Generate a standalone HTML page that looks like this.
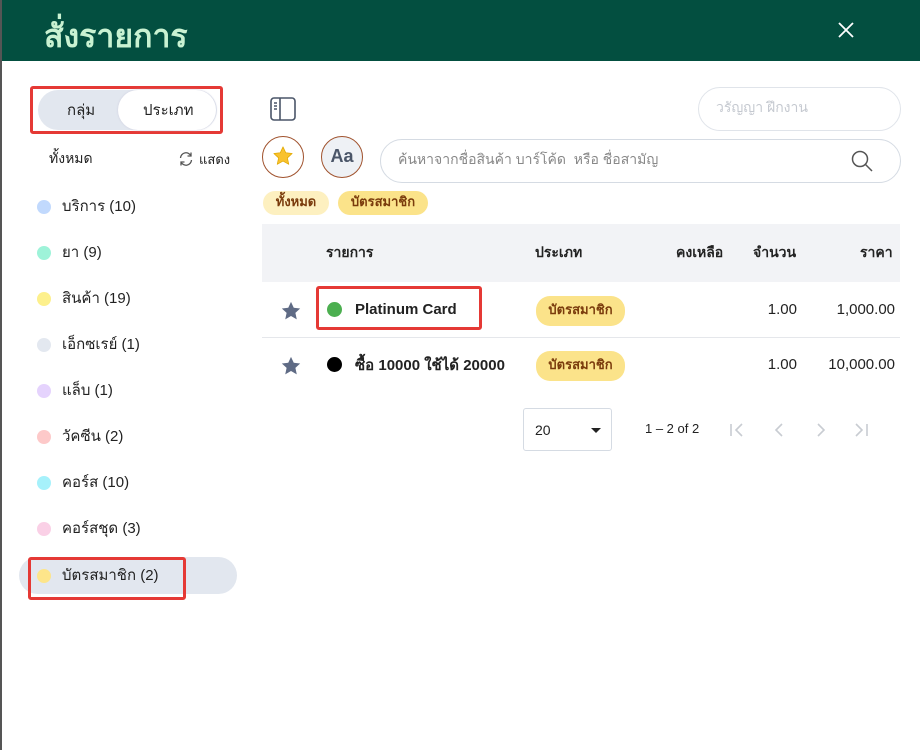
<!DOCTYPE html>
<html><head><meta charset="utf-8"><style>
*{box-sizing:border-box;margin:0;padding:0}
body{width:920px;height:750px;background:#fff;font-family:"Liberation Sans","Noto Sans CJK SC",sans-serif;position:relative;overflow:hidden;color:#222}
.abs{position:absolute}
.hdr{left:0;top:0;width:920px;height:61px;background:#034f40;border-left:2px solid #555}
.title{left:44px;top:11px;font-size:32px;color:#c9f2d2;font-weight:bold}
.lb{left:0;top:61px;width:2px;height:689px;background:#555}
.red{border:3px solid #e53935;border-radius:3px}
.dot{width:14px;height:14px;border-radius:50%}
.cat{left:37px;font-size:15px;color:#222}
.cat .dot{position:absolute;left:0;top:6px}
.cat span{position:absolute;left:25px;top:0;white-space:nowrap}
.pill{background:#fbe38a;color:#7a3b0c;border-radius:14px;font-size:13px;font-weight:bold;text-align:center}
.th{top:243px;font-size:14px;font-weight:bold;color:#222}
.num{font-size:15px;color:#222;text-align:right}
</style></head><body>
<div class="abs hdr"></div>
<div class="abs lb"></div>
<div class="abs title">สั่งรายการ</div>
<svg class="abs" style="left:836px;top:20px" width="20" height="20" viewBox="0 0 20 20"><path d="M3 3L17 17M17 3L3 17" stroke="#fff" stroke-width="1.8"/></svg>

<div class="abs red" style="left:30px;top:86px;width:193px;height:48px"></div>
<div class="abs" style="left:38px;top:90px;width:179px;height:40px;background:#e2e7ef;border-radius:20px"></div>
<div class="abs" style="left:118px;top:90px;width:98px;height:40px;background:#fff;border-radius:20px;box-shadow:0 0 2px #ccd"></div>
<div class="abs" style="left:67px;top:98px;font-size:15px">กลุ่ม</div>
<div class="abs" style="left:143px;top:98px;font-size:15px">ประเภท</div>

<div class="abs" style="left:49px;top:148px;font-size:14px">ทั้งหมด</div>
<svg class="abs" style="left:178px;top:151px" width="16" height="16" viewBox="0 0 16 16" fill="none" stroke="#555" stroke-width="1.3"><path d="M2.5 7A5.5 5.5 0 0 1 13 5M13.5 9A5.5 5.5 0 0 1 3 11"/><path d="M13 1.5V5H9.5M3 14.5V11H6.5"/></svg>
<div class="abs" style="left:199px;top:149px;font-size:13px">แสดง</div>

<div class="abs" style="left:19px;top:557px;width:218px;height:37px;background:#e2e7ef;border-radius:19px"></div>
<div class="abs red" style="left:28px;top:557px;width:158px;height:43px"></div>

<div class="abs cat" style="top:194px"><div class="dot" style="background:#c1d9fd"></div><span>บริการ (10)</span></div>
<div class="abs cat" style="top:240px"><div class="dot" style="background:#9ef3d9"></div><span>ยา (9)</span></div>
<div class="abs cat" style="top:286px"><div class="dot" style="background:#fdf08c"></div><span>สินค้า (19)</span></div>
<div class="abs cat" style="top:332px"><div class="dot" style="background:#e3e8f0"></div><span>เอ็กซเรย์ (1)</span></div>
<div class="abs cat" style="top:378px"><div class="dot" style="background:#e5d3fd"></div><span>แล็บ (1)</span></div>
<div class="abs cat" style="top:424px"><div class="dot" style="background:#fdc9c9"></div><span>วัคซีน (2)</span></div>
<div class="abs cat" style="top:470px"><div class="dot" style="background:#a6f1fb"></div><span>คอร์ส (10)</span></div>
<div class="abs cat" style="top:516px"><div class="dot" style="background:#fad0e6"></div><span>คอร์สชุด (3)</span></div>
<div class="abs cat" style="top:563px"><div class="dot" style="background:#fde58a"></div><span>บัตรสมาชิก (2)</span></div>

<svg class="abs" style="left:270px;top:97px" width="26" height="24" viewBox="0 0 26 24" fill="none" stroke="#4a5568" stroke-width="1.6"><rect x="1" y="1" width="24" height="22" rx="3"/><path d="M10 1V23M4 6H7M4 9H7M4 12H7"/></svg>
<div class="abs" style="left:698px;top:87px;width:203px;height:44px;border:1px solid #e0e4ea;border-radius:22px"></div>
<div class="abs" style="left:716px;top:97px;font-size:14px;color:#c5c9d0">วรัญญา ฝึกงาน</div>

<div class="abs" style="left:262px;top:136px;width:42px;height:42px;border:1.5px solid #a0522d;border-radius:50%"></div>
<svg class="abs" style="left:272px;top:145px" width="22" height="22" viewBox="0 0 24 24"><path d="M12 2l3 6.5 7 .8-5.2 4.8 1.5 7L12 17.5 5.7 21.1l1.5-7L2 9.3l7-.8z" fill="#f9c22e" stroke="#e0a800" stroke-width=".8" stroke-linejoin="round"/></svg>
<div class="abs" style="left:321px;top:136px;width:42px;height:42px;border:1.5px solid #a0522d;border-radius:50%;background:#eef1f5;text-align:center;line-height:39px;font-size:18px;color:#4a5568;font-weight:bold">Aa</div>
<div class="abs" style="left:380px;top:139px;width:521px;height:44px;border:1px solid #d5dbe3;border-radius:22px"></div>
<div class="abs" style="left:398px;top:149px;font-size:14px;color:#888">ค้นหาจากชื่อสินค้า บาร์โค้ด&nbsp; หรือ ชื่อสามัญ</div>
<svg class="abs" style="left:850px;top:149px" width="24" height="24" viewBox="0 0 24 24" fill="none" stroke="#555" stroke-width="1.5"><circle cx="10" cy="10" r="7.5"/><path d="M15.5 15.5L22 22"/></svg>

<div class="abs pill" style="left:263px;top:191px;width:66px;height:24px;line-height:22px;background:#fdf0c0">ทั้งหมด</div>
<div class="abs pill" style="left:338px;top:191px;width:90px;height:24px;line-height:22px">บัตรสมาชิก</div>

<div class="abs" style="left:262px;top:224px;width:638px;height:58px;background:#f2f3f6"></div>
<div class="abs th" style="left:326px;top:242px">รายการ</div>
<div class="abs th" style="left:535px;top:242px">ประเภท</div>
<div class="abs th" style="left:676px;top:242px">คงเหลือ</div>
<div class="abs th" style="left:753px;top:242px">จำนวน</div>
<div class="abs th" style="left:860px;top:242px">ราคา</div>
<div class="abs" style="left:262px;top:337px;width:638px;height:1px;background:#e5e7eb"></div>

<svg class="abs" style="left:280px;top:300px" width="22" height="22" viewBox="0 0 24 24"><path d="M12 2l3 6.5 7 .8-5.2 4.8 1.5 7L12 17.5 5.7 21.1l1.5-7L2 9.3l7-.8z" fill="#5f6b85"/></svg>
<svg class="abs" style="left:280px;top:355px" width="22" height="22" viewBox="0 0 24 24"><path d="M12 2l3 6.5 7 .8-5.2 4.8 1.5 7L12 17.5 5.7 21.1l1.5-7L2 9.3l7-.8z" fill="#5f6b85"/></svg>
<div class="abs red" style="left:316px;top:286px;width:166px;height:44px"></div>
<div class="abs dot" style="left:327px;top:302px;background:#4caf50;width:15px;height:15px"></div>
<div class="abs" style="left:355px;top:301px;font-size:15px;font-weight:bold">Platinum Card</div>
<div class="abs dot" style="left:327px;top:357px;background:#000;width:15px;height:15px"></div>
<div class="abs" style="left:355px;top:353px;font-size:15px;font-weight:bold">ซื้อ 10000 ใช้ได้ 20000</div>
<div class="abs pill" style="left:536px;top:296px;width:89px;height:30px;line-height:28px">บัตรสมาชิก</div>
<div class="abs pill" style="left:536px;top:351px;width:89px;height:30px;line-height:28px">บัตรสมาชิก</div>
<div class="abs num" style="left:720px;top:301px;width:77px">1.00</div>
<div class="abs num" style="left:800px;top:301px;width:95px">1,000.00</div>
<div class="abs num" style="left:720px;top:356px;width:77px">1.00</div>
<div class="abs num" style="left:800px;top:356px;width:95px">10,000.00</div>

<div class="abs" style="left:523px;top:408px;width:89px;height:43px;border:1px solid #d5dbe3;border-radius:3px"></div>
<div class="abs" style="left:535px;top:422px;font-size:14px">20</div>
<div class="abs" style="left:591px;top:428px;width:0;height:0;border-left:5px solid transparent;border-right:5px solid transparent;border-top:5px solid #222"></div>
<div class="abs" style="left:645px;top:421px;font-size:13px">1 – 2 of 2</div>
<svg class="abs" style="left:726px;top:420px" width="150" height="20" viewBox="0 0 150 20" fill="none" stroke="#c8ccd2" stroke-width="1.6"><path d="M5 4V16M16 4L10 10L16 16"/><path d="M56 4L50 10L56 16"/><path d="M92 4L98 10L92 16"/><path d="M130 4L136 10L130 16M141 4V16"/></svg>
</body></html>
